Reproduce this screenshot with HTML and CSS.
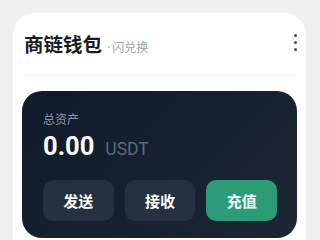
FILE: index.html
```html
<!DOCTYPE html>
<html lang="zh-CN">
<head>
<meta charset="utf-8">
<link rel="stylesheet" href="styles.css">
</head>
<body>
<div class="card">
  <header class="head">
    <div class="title"><span class="name">商链钱包</span><span class="sub"><span class="dot">·</span>闪兑换</span></div>
    <div class="kebab"><i></i><i></i><i></i></div>
  </header>
  <div class="divider"></div>
  <section class="asset">
    <div class="label">总资产</div>
    <div class="amount"><span class="num">0.00</span><span class="unit">USDT</span></div>
    <div class="actions">
      <button class="btn">发送</button>
      <button class="btn">接收</button>
      <button class="btn primary">充值</button>
    </div>
  </section>
</div>
</body>
</html>
```
FILE: styles.css
```css
* { box-sizing: border-box; }
html, body { margin: 0; padding: 0; }
body {
  width: 320px;
  height: 240px;
  overflow: hidden;
  background: #eef0f4;
  font-family: "Noto Sans CJK SC", "Noto Sans", sans-serif;
  padding: 13px 14px 0 13px;
}
.card {
  background: #ffffff;
  border-radius: 22px 22px 0 0;
  padding: 16px 10px 0 10px;
  height: 227px;
  overflow: hidden;
}
.head {
  display: flex;
  align-items: center;
  justify-content: space-between;
  height: 28px;
  padding-left: 1px;
}
.title { display: flex; align-items: baseline; }
.name {
  font-size: 19.5px;
  font-weight: 700;
  color: #161b24;
}
.sub {
  font-family: "Noto Sans", "Noto Sans CJK SC", sans-serif;
  font-size: 12px;
  color: #9aa1ab;
  margin-left: 5px;
}
.dot {
  margin-right: 2px;
}
.kebab {
  display: flex;
  flex-direction: column;
  gap: 4px;
  margin-right: -1px;
  margin-top: -1px;
}
.kebab i {
  display: block;
  width: 3px;
  height: 3px;
  border-radius: 50%;
  background: #4a4f57;
}
.divider {
  height: 1px;
  background: #eceef1;
  margin-top: 17px;
}
.asset {
  margin-top: 16px;
  margin-left: -1px;
  margin-right: -1px;
  border-radius: 20px;
  background: linear-gradient(135deg, #0f1a2a 0%, #172231 60%, #1d2635 100%);
  padding: 19px 20px 0 21px;
  height: 147px;
}
.label {
  font-size: 12px;
  color: #8a96a8;
  line-height: 18px;
}
.amount {
  display: flex;
  align-items: baseline;
  margin-top: 3px;
  height: 30px;
}
.num {
  font-family: Roboto, "Noto Sans", sans-serif;
  font-size: 25.5px;
  font-weight: 700;
  color: #ffffff;
  line-height: 30px;
}
.unit {
  font-family: Roboto, "Noto Sans", sans-serif;
  font-size: 17.5px;
  color: #596a80;
  margin-left: 11px;
}
.actions {
  display: grid;
  grid-template-columns: repeat(3, 1fr);
  gap: 11px;
  margin-top: 19px;
}
.btn {
  height: 41px;
  border: 0;
  border-radius: 10px;
  background: #253140;
  color: #ffffff;
  font-family: "Noto Sans CJK SC", sans-serif;
  font-size: 15px;
  font-weight: 700;
  padding: 0;
}
.btn.primary { background: #2b9c77; }
```
